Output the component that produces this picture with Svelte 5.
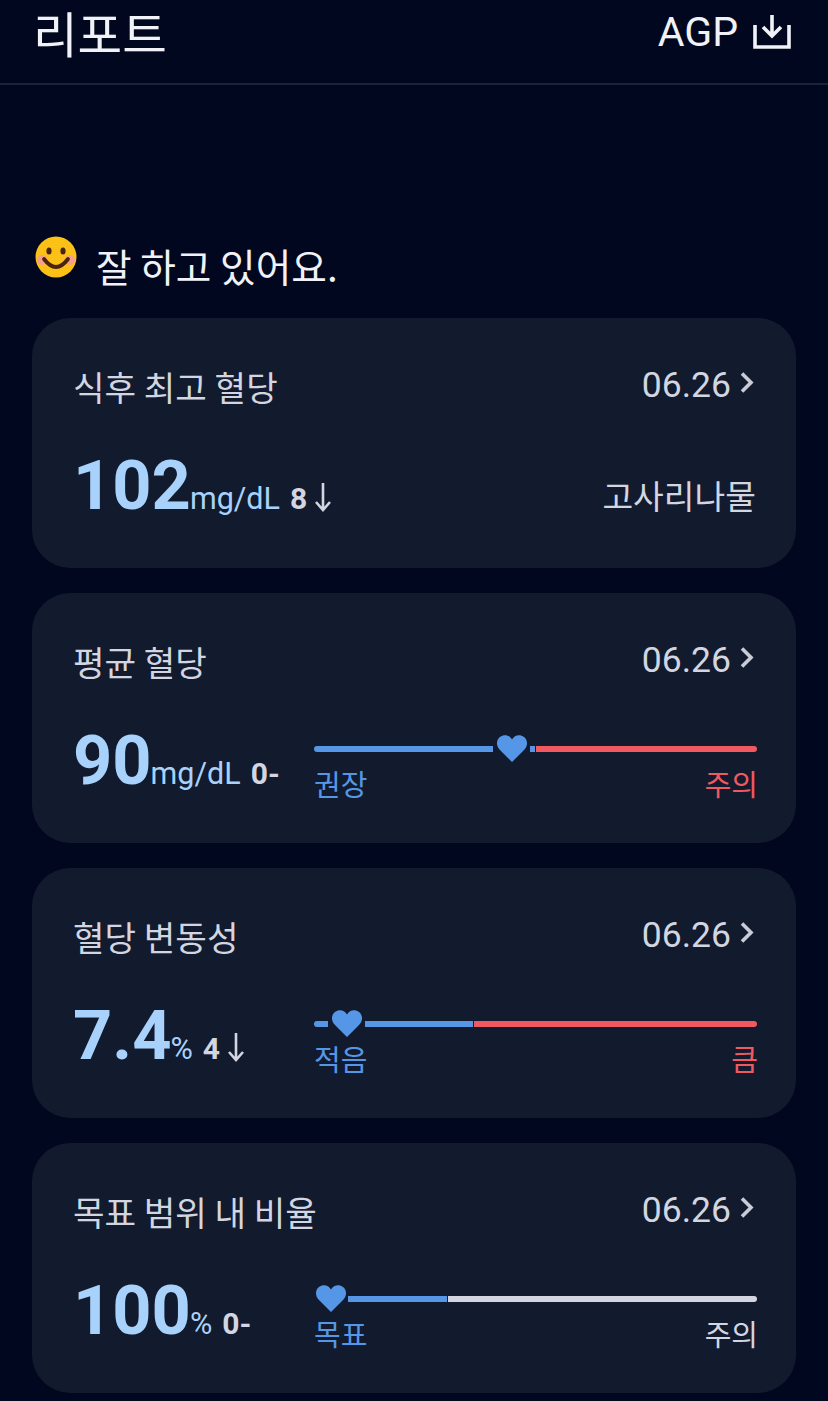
<script lang="ts">
	type Seg = { w: number; color: string } | { heart: number };

	const blue = '#5597e6';
	const red = '#f0595f';
	const grey = '#d3d6e0';

	const rows = [
		{
			title: '평균 혈당',
			value: '90',
			unit: 'mg/dL',
			delta: '0',
			dir: 'flat',
			left: '권장',
			right: '주의',
			rightColor: red,
			segs: [{ w: 180, color: blue }, { heart: 36 }, { w: 6, color: blue }, { w: 221, color: red }] as Seg[]
		},
		{
			title: '혈당 변동성',
			value: '7.4',
			unit: '%',
			delta: '4',
			dir: 'down',
			left: '적음',
			right: '큼',
			rightColor: red,
			segs: [{ w: 15, color: blue }, { heart: 36 }, { w: 109, color: blue }, { w: 283, color: red }] as Seg[]
		},
		{
			title: '목표 범위 내 비율',
			value: '100',
			unit: '%',
			delta: '0',
			dir: 'flat',
			left: '목표',
			right: '주의',
			rightColor: grey,
			segs: [{ heart: 34 }, { w: 100, color: blue }, { w: 309, color: grey }] as Seg[]
		}
	];
</script>

{#snippet head(title: string)}
	<div class="card-head">
		<span class="card-title">{title}</span>
		<span class="date">
			06.26
			<svg viewBox="0 0 16 24" width="16" height="24" aria-hidden="true">
				<path d="M3 2.5 L12 11.5 L3 20.5" fill="none" stroke="#c9ccd6" stroke-width="3.6" />
			</svg>
		</span>
	</div>
{/snippet}

{#snippet reading(value: string, unit: string, delta: string, dir: string)}
	<div class="reading">
		<span class="value">{value}</span>
		<span class="unit">{unit}</span>
		<span class="delta">{delta}</span>
		{#if dir === 'down'}
			<svg class="arrow" viewBox="0 0 18 30" width="18" height="30" aria-hidden="true">
				<path d="M9 1 V28 M2 20 L9 28 L16 20" fill="none" stroke="#d3d6e0" stroke-width="2.6" />
			</svg>
		{:else}
			<span class="dash">-</span>
		{/if}
	</div>
{/snippet}

<main>
	<header>
		<h1>리포트</h1>
		<div class="agp">
			<span>AGP</span>
			<svg viewBox="0 0 38 36" width="38" height="36" aria-hidden="true">
				<path d="M19 1 V22 M10 13 L19 22 L28 13" fill="none" stroke="#f1f2f7" stroke-width="3.6" />
				<path d="M2 11 V33 H36 V11" fill="none" stroke="#f1f2f7" stroke-width="3.6" />
			</svg>
		</div>
	</header>

	<div class="status">
		<svg viewBox="0 0 42 42" width="42" height="42" aria-hidden="true">
			<circle cx="21" cy="21" r="20.5" fill="#fbc117" />
			<circle cx="7" cy="24" r="5" fill="#f5a08a" />
			<circle cx="35" cy="24" r="5" fill="#f5a08a" />
			<ellipse cx="14" cy="15" rx="2.6" ry="3.6" fill="#4a2410" />
			<ellipse cx="28" cy="15" rx="2.6" ry="3.6" fill="#4a2410" />
			<path d="M9 23 Q21 39 33 23" fill="none" stroke="#4a2410" stroke-width="3.8" stroke-linecap="round" />
		</svg>
		<span>잘 하고 있어요.</span>
	</div>

	<section class="cards">
		<article class="card">
			{@render head('식후 최고 혈당')}
			<div class="card-body">
				{@render reading('102', 'mg/dL', '8', 'down')}
				<span class="food">고사리나물</span>
			</div>
		</article>

		{#each rows as row}
			<article class="card">
				{@render head(row.title)}
				<div class="card-body">
					{@render reading(row.value, row.unit, row.delta, row.dir)}
					<div class="gauge">
						<div class="track">
							{#each row.segs as seg}
								{#if 'heart' in seg}
									<div class="heart-slot" style="width: {seg.heart}px">
										<svg viewBox="0 0 30 27" width="30" height="27" aria-hidden="true">
											<path
												d="M15 27 L3 15 C-1.5 10.5 -0.5 4.5 3 2 C7 -1 12.5 0 15 4.5 C17.5 0 23 -1 27 2 C30.5 4.5 31.5 10.5 27 15 Z"
												fill={blue}
											/>
										</svg>
									</div>
								{:else}
									<div class="seg" style="width: {seg.w}px; background: {seg.color}"></div>
								{/if}
							{/each}
						</div>
						<div class="labels">
							<span style="color: {blue}">{row.left}</span>
							<span style="color: {row.rightColor}">{row.right}</span>
						</div>
					</div>
				</div>
			</article>
		{/each}
	</section>
</main>

<style>
	:global(body) {
		background: #01071f;
	}

	main {
		height: 1401px;
		overflow: hidden;
		background: #01071f;
		font-family: 'Noto Sans CJK KR', 'Roboto', sans-serif;
		color: #f1f2f7;
	}

	header {
		height: 64px;
		padding: 0 37px 19px 33px;
		display: flex;
		align-items: center;
		justify-content: space-between;
		border-bottom: 2px solid #1b2233;
	}

	h1 {
		margin: 0;
		font-size: 48.5px;
		font-weight: 400;
		line-height: 64px;
	}

	.agp {
		display: flex;
		align-items: center;
		gap: 15px;
		font-family: 'Roboto', sans-serif;
		font-size: 41px;
	}

	.status {
		padding: 151px 0 0 35px;
		height: 82px;
		display: flex;
		align-items: flex-start;
		gap: 19px;
		font-size: 38.7px;
		line-height: 56px;
	}

	.status span {
		margin-top: 1px;
	}

	.cards {
		padding: 0 32px;
		display: flex;
		flex-direction: column;
		gap: 25px;
	}

	.card {
		height: 250px;
		box-sizing: border-box;
		padding: 41px 41px 0 41px;
		border-radius: 38px;
		background: #121a2d;
	}

	.card-head {
		display: flex;
		justify-content: space-between;
		align-items: center;
		height: 50px;
	}

	.card-title {
		font-size: 34.3px;
		color: #d3d6e0;
		padding-top: 4px;
	}

	.date {
		display: flex;
		align-items: center;
		gap: 8px;
		padding-top: 2px;
		font-family: 'Roboto', sans-serif;
		font-size: 35.5px;
		color: #d3d6e0;
	}

	.date svg {
		margin-top: -4px;
	}

	.card-body {
		margin-top: 37px;
		height: 90px;
		display: flex;
		justify-content: space-between;
	}

	.reading {
		display: flex;
		align-items: baseline;
		height: 80px;
		font-family: 'Roboto', sans-serif;
	}

	.value {
		font-size: 68.5px;
		font-weight: 700;
		color: #a8d2fb;
		line-height: 80px;
	}

	.unit {
		margin-left: -1px;
		font-size: 30.5px;
		color: #a8d2fb;
	}

	.delta {
		margin-left: 10px;
		font-size: 30px;
		font-weight: 700;
		color: #d3d6e0;
	}

	.dash {
		font-size: 30px;
		font-weight: 700;
		color: #d3d6e0;
	}

	.arrow {
		margin-left: 7px;
		align-self: flex-end;
		margin-bottom: 14px;
	}

	.food {
		font-size: 33.4px;
		color: #d3d6e0;
		align-self: flex-start;
		line-height: 94px;
		height: 90px;
		margin: 2px -1px 0 0;
	}

	.gauge {
		width: 443px;
		margin-right: -2px;
		padding-top: 14px;
	}

	.track {
		height: 28px;
		display: flex;
		align-items: center;
	}

	.seg {
		height: 6px;
		flex: none;
		border-right: 1px solid #121a2d;
		box-sizing: border-box;
	}

	.seg:first-child {
		border-radius: 3px 0 0 3px;
	}

	.seg:last-child {
		border-right: 0;
		border-radius: 0 3px 3px 0;
	}

	.heart-slot {
		flex: none;
		height: 28px;
		display: flex;
		justify-content: center;
		align-items: flex-start;
	}

	.labels {
		display: flex;
		justify-content: space-between;
		margin-right: -1px;
		font-size: 29px;
		line-height: 40px;
	}
</style>
